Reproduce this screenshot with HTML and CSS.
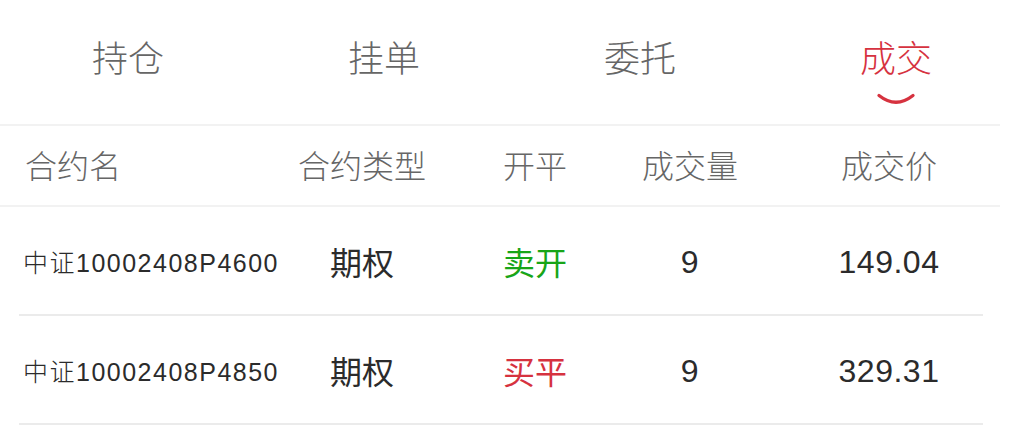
FILE: index.html
```html
<!DOCTYPE html>
<html lang="zh-CN">
<head>
<meta charset="utf-8">
<title>成交</title>
<link rel="stylesheet" href="styles.css">
</head>
<body>
<div class="page">
  <nav class="tabs">
    <div class="tab">持仓</div>
    <div class="tab">挂单</div>
    <div class="tab">委托</div>
    <div class="tab active">成交
      <svg class="smile" width="40" height="12" viewBox="0 0 40 12"><path d="M3 2.5 Q20 16 37 2.5" fill="none" stroke="#d6323f" stroke-width="3.2" stroke-linecap="round"/></svg>
    </div>
  </nav>
  <div class="divider"></div>
  <div class="grid head">
    <div class="cell name">合约名</div>
    <div class="cell">合约类型</div>
    <div class="cell">开平</div>
    <div class="cell">成交量</div>
    <div class="cell">成交价</div>
  </div>
  <div class="divider"></div>
  <div class="grid row">
    <div class="cell name">中证10002408P4600</div>
    <div class="cell">期权</div>
    <div class="cell green">卖开</div>
    <div class="cell num">9</div>
    <div class="cell num">149.04</div>
  </div>
  <div class="row-line"></div>
  <div class="grid row">
    <div class="cell name">中证10002408P4850</div>
    <div class="cell">期权</div>
    <div class="cell red">买平</div>
    <div class="cell num">9</div>
    <div class="cell num">329.31</div>
  </div>
  <div class="row-line"></div>
</div>
</body>
</html>
```
FILE: styles.css
```css
html, body {
  margin: 0;
  padding: 0;
  background: #ffffff;
}
body {
  font-family: "Liberation Sans", "Noto Sans CJK SC", sans-serif;
  color: #333333;
}
.page {
  width: 1024px;
  height: 439px;
  overflow: hidden;
}
.tabs {
  display: grid;
  grid-template-columns: repeat(4, 256px);
  height: 124px;
}
.tab {
  position: relative;
  display: flex;
  align-items: center;
  justify-content: center;
  font-family: "Noto Sans CJK SC", sans-serif;
  font-weight: 300;
  font-size: 36px;
  color: #666666;
  padding-bottom: 12px;
  box-sizing: border-box;
}
.tab.active {
  color: #d6323f;
}
.smile {
  position: absolute;
  left: 108px;
  top: 93px;
}
.divider {
  width: 1000px;
  height: 2px;
  background: #f2f2f2;
}
.grid {
  display: grid;
  grid-template-columns: 256px 212px 134px 176px 222px;
  width: 1000px;
  align-items: center;
}
.head {
  height: 79px;
  font-family: "Noto Sans CJK SC", sans-serif;
  font-weight: 300;
  font-size: 32px;
  color: #666666;
  padding-bottom: 3px;
  box-sizing: border-box;
}
.head .name {
  padding-left: 25px;
}
.cell {
  text-align: center;
  white-space: nowrap;
}
.cell.name {
  text-align: left;
}
.row {
  height: 107px;
  font-size: 32px;
  color: #2b2b2b;
}
.row .cell {
  font-family: "Noto Sans CJK SC", sans-serif;
}
.row .name {
  font-family: "Liberation Sans", "Noto Sans CJK SC", sans-serif;
  font-weight: 300;
  font-size: 25px;
  letter-spacing: 1.5px;
  padding-left: 23px;
}
.row .num {
  font-family: "Liberation Sans", sans-serif;
  letter-spacing: 0.5px;
  padding-top: 4px;
}
.green {
  color: #18a518;
}
.red {
  color: #d6323f;
}
.row-line {
  margin-left: 19px;
  width: 964px;
  height: 2px;
  background: #ebebeb;
}
```
